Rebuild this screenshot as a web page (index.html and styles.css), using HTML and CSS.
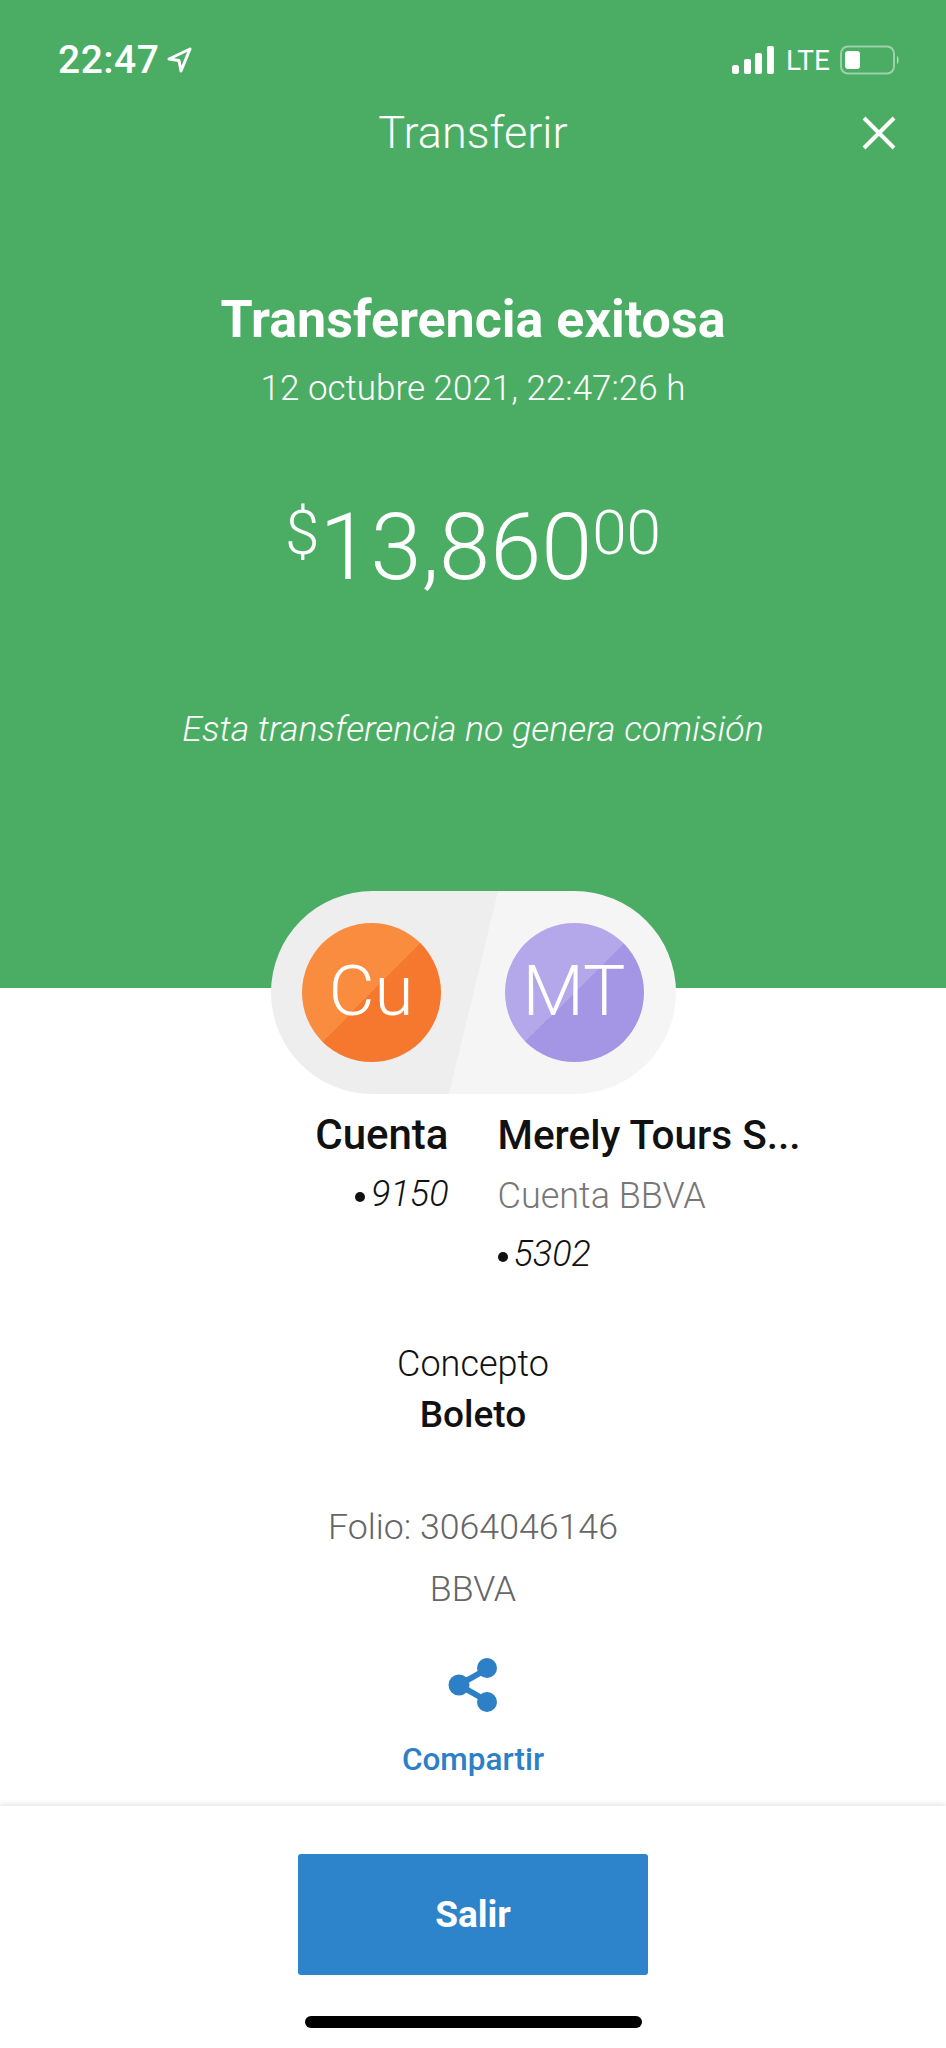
FILE: index.html
```html
<!DOCTYPE html>
<html lang="es">
<head>
    <meta charset="UTF-8">
    <meta name="viewport" content="width=device-width, initial-scale=1">
    <title>Transferir</title>
    <link rel="stylesheet" href="styles.css">
</head>
<body>

<section class="hero">
    <div class="status">
        <div class="status-left">
            <span class="time">22:47</span>
            <svg class="arrow" width="26" height="26" viewBox="0 0 26 26"><path d="M24 2 3 12l10 1.500L15 24z" fill="none" stroke="#fff" stroke-width="3" stroke-linejoin="round"/></svg>
        </div>
        <div class="status-right">
            <svg width="44" height="28" viewBox="0 0 44 28"><rect x="0" y="19" width="7" height="9" rx="2.500" fill="#fff"/><rect x="12" y="13" width="7" height="15" rx="2" fill="#fff"/><rect x="23" y="7" width="7" height="21" rx="2" fill="#fff"/><rect x="35" y="0" width="7" height="28" rx="2" fill="#fff"/></svg>
            <span class="lte">LTE</span>
            <svg width="60" height="30" viewBox="0 0 60 30"><rect x="1" y="1.500" width="53" height="27" rx="7" fill="none" stroke="#fff" stroke-opacity=".45" stroke-width="2"/><rect x="5" y="6" width="15" height="18" rx="3" fill="#fff"/><path d="M57 11c2 1 2 7 0 8z" fill="#fff" fill-opacity=".6"/></svg>
        </div>
    </div>

    <header class="nav">
        <h2 class="nav-title">Transferir</h2>
        <svg class="close" width="36" height="36" viewBox="0 0 36 36"><path d="M3 3l30 30M33 3 3 33" stroke="#fff" stroke-width="4" fill="none"/></svg>
    </header>

    <h1 class="headline">Transferencia exitosa</h1>
    <p class="date">12 octubre 2021, 22:47:26 h</p>
    <p class="amount"><sup>$</sup>13,860<sup class="cents">00</sup></p>
    <p class="note">Esta transferencia no genera comisión</p>
</section>

<section class="parties">
    <div class="pill">
        <div class="avatar orange">Cu</div>
        <div class="avatar purple">MT</div>
    </div>
    <div class="accounts">
        <div class="account from">
            <p class="name">Cuenta</p>
            <p class="number"><span class="dot"></span>9150</p>
        </div>
        <div class="account">
            <p class="name">Merely Tours S...</p>
            <p class="bank">Cuenta BBVA</p>
            <p class="number"><span class="dot"></span>5302</p>
        </div>
    </div>
</section>

<section class="details">
    <p class="label">Concepto</p>
    <p class="value">Boleto</p>
    <p class="folio">Folio: 3064046146</p>
    <p class="folio">BBVA</p>
    <a class="share" href="#">
        <svg width="52" height="56" viewBox="0 0 52 56"><path d="M40 12 12 28l28 16" fill="none" stroke="#2d7fc6" stroke-width="6"/><circle cx="40" cy="11" r="10" fill="#2d7fc6"/><circle cx="12" cy="28" r="10.500" fill="#2d7fc6"/><circle cx="40" cy="45" r="10" fill="#2d7fc6"/></svg>
        <span>Compartir</span>
    </a>
</section>

<footer class="footer">
    <button class="exit">Salir</button>
    <div class="home-bar"></div>
</footer>

</body>
</html>
```

FILE: styles.css
```css
* {
    box-sizing: border-box;
}

body {
    margin: 0;
    font-family: "Roboto", sans-serif;
    color: #111;
    background: #fff;
}

p, h1, h2 {
    margin: 0;
}

.hero {
    height: 988px;
    background: #4bad64;
    color: #fff;
    text-align: center;
    padding-top: 38px;
}

.status {
    display: flex;
    justify-content: space-between;
    align-items: center;
    height: 44px;
    padding: 0 46px 0 58px;
}

.status-left, .status-right {
    display: flex;
    align-items: center;
}

.time {
    font-size: 39px;
    font-weight: 500;
    letter-spacing: .5px;
}

.arrow {
    margin-left: 7px;
}

.lte {
    font-size: 28px;
    margin: 0 10px 0 10px;
}

.nav {
    position: relative;
    margin-top: 26px;
    height: 50px;
}

.nav-title {
    font-size: 45px;
    font-weight: 300;
    line-height: 50px;
}

.close {
    position: absolute;
    right: 49px;
    top: 7px;
}

.headline {
    margin-top: 132px;
    font-size: 52px;
    font-weight: 700;
    line-height: 60px;
}

.date {
    margin-top: 17px;
    font-size: 35px;
    font-weight: 300;
    line-height: 44px;
}

.amount {
    margin-top: 77px;
    font-size: 92px;
    font-weight: 300;
    line-height: 120px;
}

.amount sup {
    font-size: 62px;
    line-height: 0;
    vertical-align: 25px;
}

.note {
    margin-top: 99px;
    font-size: 35.700px;
    font-weight: 300;
    font-style: italic;
    line-height: 44px;
}

.parties {
    margin-top: -97px;
}

.pill {
    width: 405px;
    height: 203px;
    margin: 0 auto;
    display: flex;
    justify-content: space-between;
    align-items: center;
    padding: 0 32px 0 31px;
    border-radius: 102px;
    background: linear-gradient(103.6deg, #eeeeee 50%, #f5f5f5 50%);
}

.avatar {
    width: 139px;
    height: 139px;
    border-radius: 50%;
    color: #fff;
    font-size: 71px;
    font-weight: 300;
    line-height: 135px;
    text-align: center;
}

.orange {
    background: linear-gradient(135deg, #f98c3f 50%, #f5782e 50%);
}

.purple {
    background: linear-gradient(135deg, #b4a8ea 50%, #a496e5 50%);
}

.accounts {
    display: grid;
    grid-template-columns: 1fr 1fr;
    column-gap: 49px;
    margin-top: 16px;
}

.from {
    text-align: right;
}

.name {
    font-size: 40.500px;
    font-weight: 500;
    line-height: 50px;
}

.from .name {
    font-size: 42px;
}

.number {
    font-size: 36px;
    font-style: italic;
    font-weight: 300;
    line-height: 50px;
    margin-top: 9px;
}

.dot {
    display: inline-block;
    width: 10px;
    height: 10px;
    border-radius: 50%;
    background: #111;
    margin-right: 6px;
    vertical-align: 4px;
}

.bank {
    font-size: 36px;
    font-weight: 300;
    color: #777;
    line-height: 46px;
    margin-top: 13px;
}

.bank + .number {
    margin-top: 10px;
}

.details {
    text-align: center;
    margin-top: 60px;
}

.label {
    font-size: 36px;
    font-weight: 300;
    line-height: 50px;
}

.value {
    font-size: 37px;
    font-weight: 500;
    line-height: 50px;
    margin-top: 1px;
}

.folio {
    font-size: 35.700px;
    font-weight: 300;
    color: #666;
    line-height: 50px;
}

.value + .folio {
    margin-top: 62px;
}

.folio + .folio {
    margin-top: 12px;
}

.share {
    display: flex;
    flex-direction: column;
    align-items: center;
    margin-top: 43px;
    color: #2d7fc6;
    font-size: 31.500px;
    font-weight: 500;
    text-decoration: none;
}

.share span {
    margin-top: 29px;
    line-height: 36px;
}

.footer {
    margin-top: 28px;
    box-shadow: 0 -2px 5px rgba(0, 0, 0, .1);
    display: flex;
    flex-direction: column;
    align-items: center;
    padding-top: 48px;
}

.exit {
    width: 350px;
    height: 121px;
    border: 0;
    border-radius: 3px;
    background: #2d84ca;
    color: #fff;
    font-family: inherit;
    font-size: 37px;
    font-weight: 700;
}

.home-bar {
    width: 337px;
    height: 12px;
    margin-top: 41px;
    border-radius: 6px;
    background: #000;
}
```
